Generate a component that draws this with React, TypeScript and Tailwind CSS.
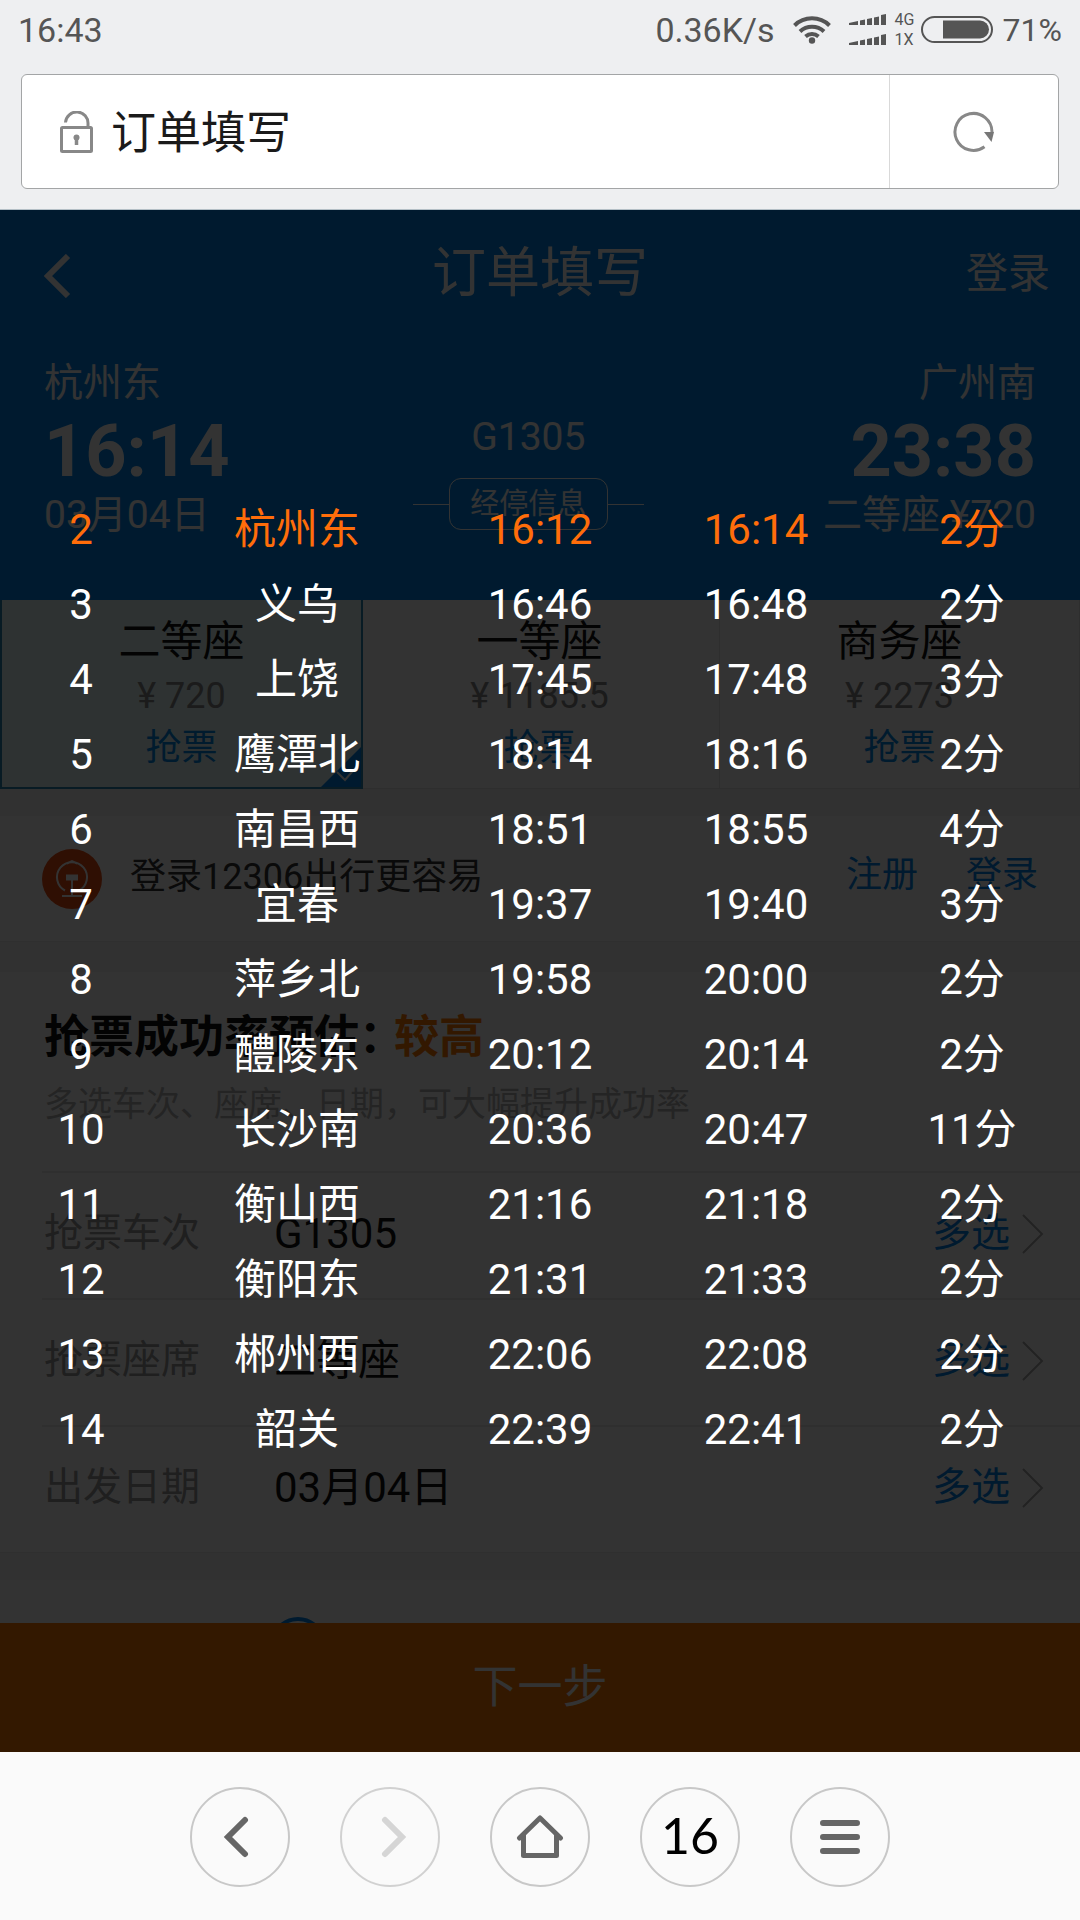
import React from 'react';

const stops = [
  { no: 2, name: '杭州东', arrive: '16:12', depart: '16:14', stay: '2分', current: true },
  { no: 3, name: '义乌', arrive: '16:46', depart: '16:48', stay: '2分' },
  { no: 4, name: '上饶', arrive: '17:45', depart: '17:48', stay: '3分' },
  { no: 5, name: '鹰潭北', arrive: '18:14', depart: '18:16', stay: '2分' },
  { no: 6, name: '南昌西', arrive: '18:51', depart: '18:55', stay: '4分' },
  { no: 7, name: '宜春', arrive: '19:37', depart: '19:40', stay: '3分' },
  { no: 8, name: '萍乡北', arrive: '19:58', depart: '20:00', stay: '2分' },
  { no: 9, name: '醴陵东', arrive: '20:12', depart: '20:14', stay: '2分' },
  { no: 10, name: '长沙南', arrive: '20:36', depart: '20:47', stay: '11分' },
  { no: 11, name: '衡山西', arrive: '21:16', depart: '21:18', stay: '2分' },
  { no: 12, name: '衡阳东', arrive: '21:31', depart: '21:33', stay: '2分' },
  { no: 13, name: '郴州西', arrive: '22:06', depart: '22:08', stay: '2分' },
  { no: 14, name: '韶关', arrive: '22:39', depart: '22:41', stay: '2分' },
];

const seats = [
  { name: '二等座', price: '720', selected: true },
  { name: '一等座', price: '1185.5' },
  { name: '商务座', price: '2273' },
];

const options = [
  { label: '抢票车次', value: 'G1305' },
  { label: '抢票座席', value: '二等座' },
  { label: '出发日期', value: '03月04日' },
];

const SignalBars = () => (
  <svg width="38" height="12" viewBox="0 0 38 12" fill="#555">
    <path d="M0 9 9 7v4H0zM11 6.500l5-1V11h-5zM18 5l5-1v7h-5zM25 3.500l5-1V11h-5zM32 1l5-1v11h-5z" />
  </svg>
);

const StatusBar = () => (
  <div className="flex h-[60px] items-center px-[18px] text-[34px] text-[#555]">
    <span className="flex-1">16:43</span>
    <span>0.36K/s</span>
    <svg className="ml-[18px]" width="38" height="28" viewBox="0 0 38 28" fill="none" stroke="#555" strokeWidth="4">
      <path d="M1.5 9.500a25 25 0 0 1 35 0M7 15.500a17.500 17.500 0 0 1 24 0M12.500 20.500a10 10 0 0 1 13 0" />
      <circle cx="19" cy="24.500" r="3.200" fill="#555" stroke="none" />
    </svg>
    <div className="ml-[18px] flex flex-col gap-2">
      <SignalBars />
      <SignalBars />
    </div>
    <div className="ml-2 flex w-[22px] flex-col text-base leading-5">
      <span>4G</span>
      <span>1X</span>
    </div>
    <svg className="ml-1" width="72" height="28" viewBox="0 0 72 28">
      <rect x="1" y="1" width="70" height="25" rx="12.5" fill="none" stroke="#555" strokeWidth="2" />
      <path d="M22 4.500h37a9 9 0 0 1 0 18H22z" fill="#555" />
    </svg>
    <span className="ml-[10px] text-[32px]">71%</span>
  </div>
);

const AddressBar = () => (
  <div className="px-[21px] pt-[14px] pb-5">
    <div className="flex h-[115px] overflow-hidden rounded-md border border-[#a3a5a6] bg-white">
      <div className="flex flex-1 items-center pl-[38px]">
        <svg width="33" height="42" viewBox="0 0 33 42" fill="none" stroke="#888" strokeWidth="3">
          <rect x="1.500" y="16.500" width="30" height="24" rx="1" />
          <path d="M5.500 11.500a11 11 0 0 1 22.500 1.500v3" />
          <circle cx="16.500" cy="26.500" r="3" fill="#888" stroke="none" />
          <path d="M16.500 27v7" strokeWidth="3.500" />
        </svg>
        <input
          aria-label="地址"
          readOnly
          defaultValue="订单填写"
          className="ml-[18px] min-w-0 flex-1 pt-1 text-[45px] text-[#1a1a1a] outline-none"
        />
      </div>
      <button aria-label="刷新" className="flex w-[169px] items-center justify-center border-l border-[#d9d9d9]">
        <svg width="42" height="42" viewBox="0 0 42 42" fill="none">
          <path d="M39 21a18.500 18.500 0 1 0-7.500 14.800" stroke="#888" strokeWidth="3" />
          <path d="M31 21h10l-2.500 10z" fill="#777" />
        </svg>
      </button>
    </div>
  </div>
);

const TripHeader = () => (
  <header className="h-[390px] bg-[#0084e8] text-white">
    <div className="grid h-[128px] grid-cols-3 items-center px-[30px]">
      <button aria-label="返回" className="pt-1 pl-[14px]">
        <svg width="28" height="44" viewBox="0 0 28 44" fill="none" stroke="currentColor" strokeWidth="6">
          <path d="M24 2 4 22l20 20" />
        </svg>
      </button>
      <h1 className="text-center text-[54px] leading-none">订单填写</h1>
      <button className="justify-self-end text-[42px] leading-none">登录</button>
    </div>
    <div className="flex justify-between px-[44px] pt-5 text-[39px] leading-[50px]">
      <div>
        <p>杭州东</p>
        <p className="pt-1.5 text-[72px] leading-[76px] font-bold">16:14</p>
        <p>03月04日</p>
      </div>
      <div className="pt-[54px] pl-1">
        <p className="text-center">G1305</p>
        <div className="mt-4 flex items-center">
          <span className="h-px w-9 bg-white" />
          <button className="h-[52px] w-[159px] rounded-xl border border-white text-[29px] leading-none">经停信息</button>
          <span className="h-px w-9 bg-white" />
        </div>
      </div>
      <div className="text-right">
        <p>广州南</p>
        <p className="pt-1.5 text-[72px] leading-[76px] font-bold">23:38</p>
        <p>二等座 ¥720</p>
      </div>
    </div>
  </header>
);

const SeatTabs = () => (
  <div className="grid grid-cols-3">
    {seats.map((seat) => (
      <button
        key={seat.name}
        aria-pressed={!!seat.selected}
        className={
          seat.selected
            ? 'relative -mr-[3px] h-[189px] border-2 border-t-0 border-[#2a86b5] bg-[#e4fbfa]'
            : 'h-[189px] border-r border-b border-[#e6e6e6] bg-white'
        }
      >
        <span className="block text-[42px] leading-[56px] text-[#111]">{seat.name}</span>
        <span className="block text-[36px] leading-[52px] text-[#888]">¥ {seat.price}</span>
        <span className="block text-[36px] leading-[52px] text-[#0086e6]">抢票</span>
        {seat.selected && (
          <svg className="absolute right-0 bottom-0" width="40" height="40" viewBox="0 0 40 40">
            <path d="M40 0v40H0z" fill="#0084e8" />
            <path d="m16 25 8 8 13-15" fill="none" stroke="#fff" strokeWidth="2" />
          </svg>
        )}
      </button>
    ))}
  </div>
);

const LoginRow = () => (
  <div className="flex h-[125px] items-center bg-white px-[42px] text-[36px]">
    <svg width="60" height="60" viewBox="0 0 60 60" fill="none" stroke="#fff" strokeWidth="2">
      <circle cx="30" cy="30" r="30" fill="#e84a10" stroke="none" />
      <path d="M23 41.500a15 15 0 1 1 14 0M25 14.500l5-2.500 5 2.500M30 31v15M20 47h20" />
      <path d="M25 26.500h10v4H25z" fill="#fff" />
    </svg>
    <span className="ml-[28px] flex-1 pb-1 text-[#333]">登录12306出行更容易</span>
    <a href="#register" className="pb-2 text-[#0084e8]">注册</a>
    <a href="#login" className="ml-12 pb-2 text-[#0084e8]">登录</a>
  </div>
);

const GrabOptions = () => (
  <div className="bg-white">
    <div className="h-[199px] pt-[38px] pl-[44px]">
      <h2 className="text-[45px] leading-[56px] font-bold text-[#111]">
        抢票成功率预估：<span className="-ml-2.5 text-[#ff7700]">较高</span>
      </h2>
      <p className="pt-[14px] text-[34px] leading-[48px] text-[#b4b4b4]">多选车次、座席、日期，可大幅提升成功率</p>
    </div>
    {options.map((option) => (
      <div key={option.label} className="ml-[42px] flex h-[127px] items-center border-t-2 border-[#ebebeb] pr-9 pb-1 pl-0.5 text-[39px]">
        <span className="w-[230px] text-[#999]">{option.label}</span>
        <span className="flex-1 text-[42px] text-[#111]">{option.value}</span>
        <button className="flex items-center gap-3 text-[#0084e8]">
          多选
          <svg width="22" height="40" viewBox="0 0 22 40" fill="none" stroke="#aaa" strokeWidth="2">
            <path d="m1 1 19 19L1 39" />
          </svg>
        </button>
      </div>
    ))}
  </div>
);

const StopsOverlay = () => (
  <div className="absolute inset-0 bg-black/80 pt-[282px]">
    <table className="w-full table-fixed text-center text-[42px] leading-none text-white">
      <colgroup>
        <col className="w-[15%]" />
        <col className="w-[25%]" />
        <col className="w-[20%]" />
        <col className="w-[20%]" />
        <col className="w-[20%]" />
      </colgroup>
      <tbody>
        {stops.map((stop) => (
          <tr key={stop.no} className={stop.current ? 'h-[75px] text-[#ff6d0a]' : 'h-[75px]'}>
            <td>{stop.no}</td>
            <td>{stop.name}</td>
            <td>{stop.arrive}</td>
            <td>{stop.depart}</td>
            <td>{stop.stay}</td>
          </tr>
        ))}
      </tbody>
    </table>
  </div>
);

const circle = 'flex h-[100px] w-[100px] items-center justify-center rounded-full border-2 border-[#c8c8c8]';

const BrowserNav = () => (
  <nav className="flex h-[168px] items-center justify-center gap-[50px] bg-[#fafafa] pt-0.5 text-[#666]">
    <button aria-label="后退" className={circle}>
      <svg className="mr-2" width="26" height="42" viewBox="0 0 26 42" fill="none" stroke="currentColor" strokeWidth="6" strokeLinecap="round">
        <path d="M22 4 5 21l17 17" />
      </svg>
    </button>
    <button aria-label="前进" disabled className={circle + ' opacity-80'}>
      <svg className="ml-2" width="26" height="42" viewBox="0 0 26 42" fill="none" stroke="#ccc" strokeWidth="6" strokeLinecap="round">
        <path d="m4 4 17 17L4 38" />
      </svg>
    </button>
    <button aria-label="主页" className={circle}>
      <svg width="48" height="46" viewBox="0 0 48 46" fill="none" stroke="currentColor" strokeWidth="5" strokeLinecap="round" strokeLinejoin="round">
        <path d="M3.500 24 24 4l20.500 20M7.500 21v20.500h33V21" />
      </svg>
    </button>
    <button aria-label="窗口" className={circle + ' pb-1 font-[Lato] text-[50px] text-black'}>16</button>
    <button aria-label="菜单" className={circle}>
      <svg width="40" height="34" viewBox="0 0 40 34" stroke="currentColor" strokeWidth="6" strokeLinecap="round">
        <path d="M3 3h34M3 17h34M3 31h34" />
      </svg>
    </button>
  </nav>
);

const App = () => {
  return (
    <div className="bg-[#eeeff1] font-[Roboto,'Noto_Sans_CJK_SC',sans-serif]">
      <StatusBar />
      <AddressBar />
      <main className="relative border-t border-[#b4bfc6] bg-[#f5f5f5]">
        <TripHeader />
        <SeatTabs />
        <div className="h-[27px]" />
        <LoginRow />
        <div className="h-[31px] border-t border-[#ebebeb]" />
        <GrabOptions />
        <div className="h-[28px] border-t border-[#ebebeb]" />
        {/* next section is cut off by the submit button */}
        <div className="h-[43px] overflow-hidden bg-white pt-[37px] pl-[270px]">
          <svg width="56" height="56" viewBox="0 0 56 56" fill="none" stroke="#0084e8" strokeWidth="4">
            <circle cx="28" cy="28" r="26" />
          </svg>
        </div>
        <button className="h-[129px] w-full bg-[#ff7700] text-[45px] text-white">下一步</button>
        <StopsOverlay />
      </main>
      <BrowserNav />
    </div>
  );
};

export default App;
